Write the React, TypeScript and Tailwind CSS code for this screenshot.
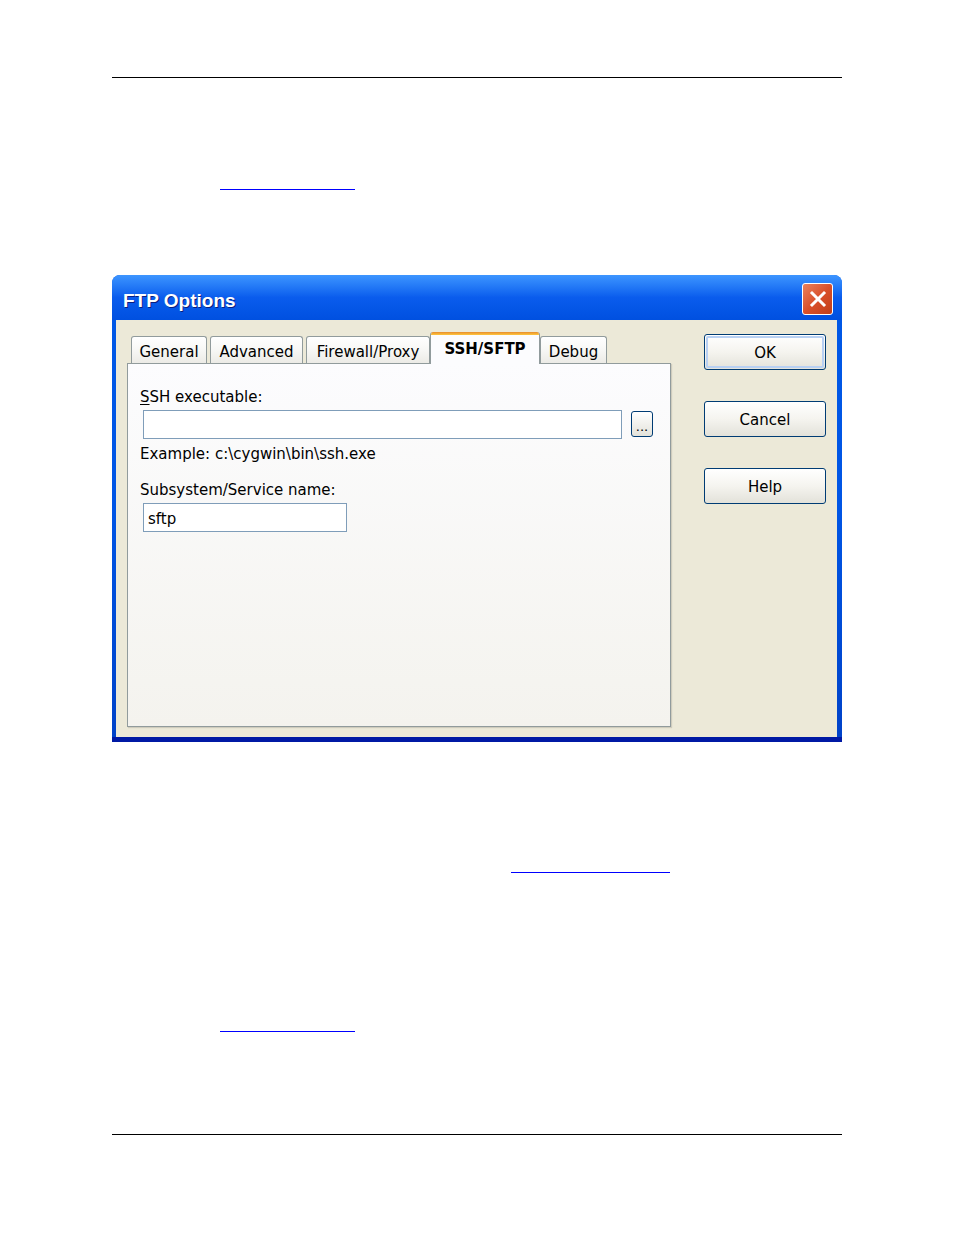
import React from "react";

const UI = { fontFamily: '"DejaVu Sans", Verdana, sans-serif' };
const TITLE = { fontFamily: '"Liberation Sans", Arial, sans-serif' };

function Tab({ label, width, active, className = "" }: { label: string; width: number; active?: boolean; className?: string }) {
  if (active) {
    return (
      <div
        className={`relative z-10 -mb-px flex h-[32px] flex-col overflow-hidden rounded-t-[3px] border-x border-[#919b9c] bg-[#fcfcfe] ${className}`}
        style={{ width }}
      >
        <div className="h-[3px] shrink-0 bg-gradient-to-b from-[#e68b2c] to-[#ffc73c]" />
        <div className="flex flex-1 items-center justify-center pb-[1px] text-[15px] font-bold text-black">{label}</div>
      </div>
    );
  }
  return (
    <div
      className={`flex h-[27px] items-center justify-center rounded-t-[3px] border-x border-t border-[#919b9c] bg-gradient-to-b from-white via-[#f7f7f5] to-[#ecebe6] pt-[4px] text-[15px] text-black ${className}`}
      style={{ width }}
    >
      {label}
    </div>
  );
}

function XpButton({ label, isDefault }: { label: string; isDefault?: boolean }) {
  return (
    <div className="h-[36px] w-[122px] rounded-[3px] border border-[#003c74] bg-gradient-to-b from-white via-[#f5f4ef] to-[#e3e2da] p-px">
      <div
        className={`flex h-full w-full items-center justify-center rounded-[2px] pt-[2px] text-[15px] text-black ${
          isDefault ? "border-2 border-[#b8d0f3]" : "border-2 border-transparent"
        }`}
      >
        {label}
      </div>
    </div>
  );
}

export default function App() {
  return (
    <div className="min-h-[1235px] w-[954px] bg-white pt-[77px]" style={UI}>
      <div className="ml-[112px] h-px w-[730px] bg-black" />
      <div className="ml-[220px] mt-[111px] h-px w-[135px] bg-[#0000ff]" />

      {/* dialog */}
      <div className="ml-[112px] mt-[85px] flex h-[467px] w-[730px] flex-col rounded-t-[8px] bg-gradient-to-b from-[#0058e6] via-[#0055e5] to-[#0042c8] shadow-[inset_0_-5px_0_#0019a4]">
        <div className="flex h-[45px] shrink-0 items-start justify-between rounded-t-[8px] bg-gradient-to-b from-[#3d95ff] via-[#0a5ced] to-[#0050e0] pl-[11px] pr-[9px]">
          <div
            className="mt-[15px] text-[19px] font-bold leading-[22px] text-white [text-shadow:1px_1px_0_#0a1f80]"
            style={TITLE}
          >
            FTP Options
          </div>
          <div className="mt-[8px] flex h-[32px] w-[31px] items-center justify-center rounded-[3px] border border-white bg-gradient-to-br from-[#e9805c] via-[#d9502a] to-[#c23e19]">
            <svg width="18" height="18" viewBox="0 0 18 18">
              <path d="M3 3 L15 15 M15 3 L3 15" stroke="white" strokeWidth="3" strokeLinecap="square" />
            </svg>
          </div>
        </div>

        <div className="mb-[5px] ml-[4px] mr-[5px] flex flex-1 bg-[#ece9d8] pl-[11px] pt-[12px]">
          {/* left: tabs + pane */}
          <div className="flex w-[544px] flex-col">
            <div className="flex h-[31px] items-end pl-[4px]">
              <Tab label="General" width={76} />
              <Tab label="Advanced" width={93} className="ml-[3px]" />
              <Tab label="Firewall/Proxy" width={124} className="ml-[3px]" />
              <Tab label="SSH/SFTP" width={110} active />
              <Tab label="Debug" width={67} />
            </div>
            <div className="h-[364px] border border-[#919b9c] bg-gradient-to-b from-[#fcfcfe] to-[#f4f3ee] pl-[12px] pt-[24px] shadow-[1px_1px_1px_rgba(0,0,0,0.12)]">
              <div className="text-[15px] leading-[18px] text-black">
                <span className="underline underline-offset-2">S</span>SH executable:
              </div>
              <div className="ml-[3px] mt-[4px] flex items-start">
                <div className="h-[29px] w-[479px] border border-[#7f9db9] bg-white" />
                <div className="ml-[9px] mt-px flex h-[26px] w-[22px] items-end justify-center rounded-[3px] border border-[#003c74] bg-gradient-to-b from-white to-[#e3e2da] pb-[3px] text-[13px] leading-none text-black">
                  ...
                </div>
              </div>
              <div className="mt-[6px] text-[15px] leading-[18px] text-black">Example: c:\cygwin\bin\ssh.exe</div>
              <div className="mt-[18px] text-[15px] leading-[18px] text-black">Subsystem/Service name:</div>
              <div className="ml-[3px] mt-[4px] flex h-[29px] w-[204px] items-center border border-[#7f9db9] bg-white pl-[4px] pt-[3px] text-[15px] text-black">
                sftp
              </div>
            </div>
          </div>

          {/* right: buttons */}
          <div className="ml-[33px] flex flex-col gap-[31px] pt-[2px]">
            <XpButton label="OK" isDefault />
            <XpButton label="Cancel" />
            <XpButton label="Help" />
          </div>
        </div>
      </div>

      <div className="ml-[511px] mt-[130px] h-px w-[159px] bg-[#0000ff]" />
      <div className="ml-[220px] mt-[158px] h-px w-[135px] bg-[#0000ff]" />
      <div className="ml-[112px] mt-[102px] h-px w-[730px] bg-black" />
    </div>
  );
}
